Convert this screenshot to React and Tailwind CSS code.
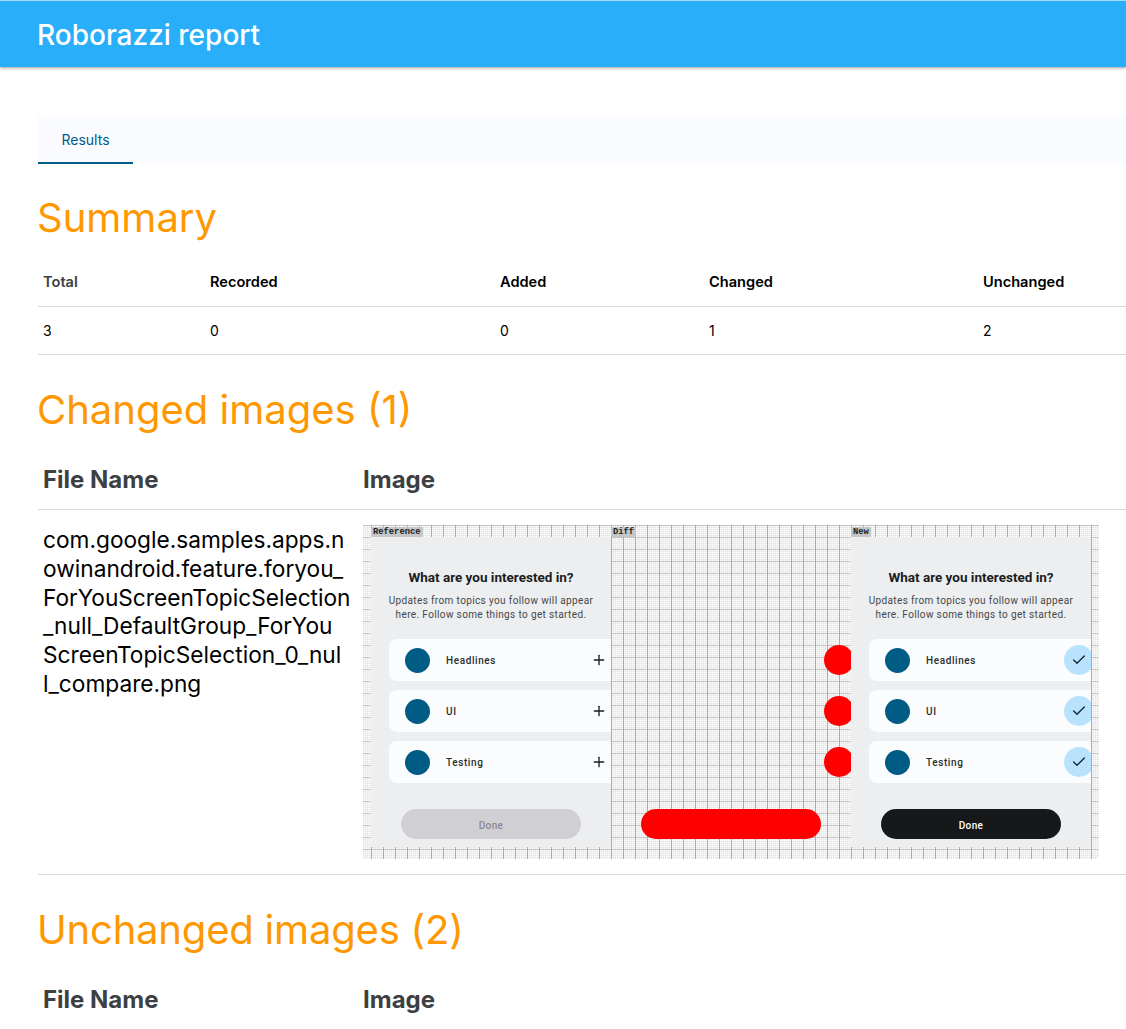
import { Check, Plus } from "lucide-react";

const summary = [
    { w: "w-[167px]", head: "Total", value: "3", color: "text-[#3c4043]" },
    { w: "w-[290px]", head: "Recorded", value: "0", color: "text-black" },
    { w: "w-[209px]", head: "Added", value: "0", color: "text-black" },
    { w: "w-[274px]", head: "Changed", value: "1", color: "text-black" },
    { w: "flex-1", head: "Unchanged", value: "2", color: "text-black" },
];

const topics = ["Headlines", "UI", "Testing"];

const fileNameLines = [
    "com.google.samples.apps.n",
    "owinandroid.feature.foryou_",
    "ForYouScreenTopicSelection",
    "_null_DefaultGroup_ForYou",
    "ScreenTopicSelection_0_nul",
    "l_compare.png",
];

const gridClass =
    "bg-white bg-[linear-gradient(to_right,#ababab_1px,transparent_1px),linear-gradient(to_bottom,#c4c4c4_1px,transparent_1px),repeating-linear-gradient(to_right,#ebebeb_0,#ebebeb_1px,transparent_1px,transparent_2px),repeating-linear-gradient(to_bottom,#ebebeb_0,#ebebeb_1px,transparent_1px,transparent_2px)] bg-[length:12px_12px,12px_12px,auto,auto] bg-[position:8px_0,0_0,0_0,0_0]";

const Label = ({ children }) => (
    <div className="h-[12px] pt-[2px]">
        <span className="block w-fit h-[10px] px-[2px] bg-[#c6c6c6] font-['Liberation_Mono',monospace] font-bold text-[8.8px] leading-[10px] text-[#222]">
            {children}
        </span>
    </div>
);

const PhonePanel = ({ label, selected }) => (
    <div className="w-[240px] shrink-0">
        <Label>{label}</Label>
        <div className="h-[310px] bg-[#edeef0] overflow-hidden pt-[33px] font-['Roboto',sans-serif]">
            <div className="ml-[12px] w-[216px] text-center">
                <p className="font-bold text-[13.5px] leading-[14px] text-[#1a1c1e] whitespace-nowrap">What are you interested in?</p>
                <p className="mt-[10px] text-[10px] leading-[14px] tracking-[0.37px] text-[#44474a]">
                    Updates from topics you follow will appear here. Follow some things to get started.
                </p>
            </div>
            <div className="mt-[17px] ml-[18px] flex flex-col gap-[9px]">
                {topics.map((t) => (
                    <div key={t} className="w-[222px] h-[42px] shrink-0 overflow-hidden rounded-l-[8px] bg-[#fbfcfe] flex items-center pl-[16px]">
                        <span className="w-[25px] h-[25px] rounded-full bg-[#005c85]" />
                        <span className="ml-[16px] flex-1 text-[10px] font-medium tracking-[0.6px] text-[#2a2c2e]">{t}</span>
                        {selected ? (
                            <span className="w-[30px] h-[30px] shrink-0 -mr-[3px] rounded-full bg-[#b9e3fd] flex items-center justify-center">
                                <Check size={16} strokeWidth={2} className="text-[#14242e]" />
                            </span>
                        ) : (
                            <Plus size={16} strokeWidth={2} className="mr-[4px] text-[#1a1c1e]" />
                        )}
                    </div>
                ))}
            </div>
            <div
                className={`mt-[26px] ml-[30px] w-[180px] h-[30px] pt-[2px] rounded-full flex items-center justify-center text-[10px] font-medium tracking-[0.4px] ${
                    selected ? "bg-[#17181a] text-white" : "bg-[#d0d0d4] text-[#8a8b8e]"
                }`}
            >
                Done
            </div>
        </div>
    </div>
);

const DiffPanel = () => (
    <div className="w-[240px] shrink-0 relative">
        <Label>Diff</Label>
        <div className="h-[310px] overflow-hidden pt-[108px] pl-[213px]">
            <div className="flex flex-col gap-[21px]">
                {topics.map((t) => (
                    <div key={t} className="w-[30px] h-[30px] rounded-full bg-[#ff0000]" />
                ))}
            </div>
        </div>
        <div className="absolute left-[30px] top-[284px] w-[180px] h-[30px] rounded-full bg-[#ff0000]" />
    </div>
);

const CompareImage = () => (
    <div className={`w-[736px] h-[334px] flex pl-[8px] overflow-hidden ${gridClass}`}>
        <PhonePanel label="Reference" />
        <DiffPanel />
        <PhonePanel label="New" selected />
    </div>
);

const ImageTableHead = () => (
    <div className="flex h-[59px] items-center border-b border-[#d9d9d9] pl-[5px] text-[24px] font-bold text-[#3c4043]">
        <div className="w-[320px]">File Name</div>
        <div>Image</div>
    </div>
);

const Heading = ({ className, children }) => (
    <h2 className={`${className} -ml-px text-[40px] leading-[48px] font-[430] text-[#ff9800]`}>{children}</h2>
);

export default function App() {
    return (
        <div className="h-[1029px] overflow-hidden bg-white font-['Inter',sans-serif]">
            <header className="h-[67px] pt-[1px] bg-[#29aff9] border-t border-[#a5dcf5] shadow-[0_1px_3px_rgba(0,0,0,0.4)] flex items-center pl-[38px]">
                <h1 className="-ml-px text-[28px] leading-none font-[450] text-white">Roborazzi report</h1>
            </header>

            <main className="pl-[38px]">
                <div className="mt-[49px] h-[48px] bg-[#fafbfe] flex">
                    <div className="w-[95px] h-[48px] border-b-2 border-[#005c8a] flex items-center justify-center text-[14px] text-[#005c8a]">
                        Results
                    </div>
                </div>

                <Heading className="mt-[30px]">Summary</Heading>

                <div className="mt-[15px]">
                    <div className="flex h-[50px] pt-[2px] items-center border-b border-[#d9d9d9] text-[14.6px] font-semibold text-black">
                        {summary.map((c) => (
                            <div key={c.head} className={`${c.w} pl-[5px] ${c.color}`}>{c.head}</div>
                        ))}
                    </div>
                    <div className="flex h-[48px] items-center border-b border-[#d9d9d9] text-[14px] text-black">
                        {summary.map((c) => (
                            <div key={c.head} className={`${c.w} pl-[5px]`}>{c.value}</div>
                        ))}
                    </div>
                </div>

                <Heading className="mt-[31px]">Changed images (1)</Heading>

                <div className="mt-[17px]">
                    <ImageTableHead />
                    <div className="flex h-[365px] border-b border-[#d9d9d9] pl-[5px] pt-[15px]">
                        <div className="w-[320px] pt-[1px] text-[22.7px] leading-[28.8px] text-black whitespace-nowrap">
                            {fileNameLines.map((line) => (
                                <div key={line}>{line}</div>
                            ))}
                        </div>
                        <CompareImage />
                    </div>
                </div>

                <Heading className="mt-[31px] tracking-[-0.2px]">Unchanged images (2)</Heading>

                <div className="mt-[17px]">
                    <ImageTableHead />
                </div>
            </main>
        </div>
    );
}
